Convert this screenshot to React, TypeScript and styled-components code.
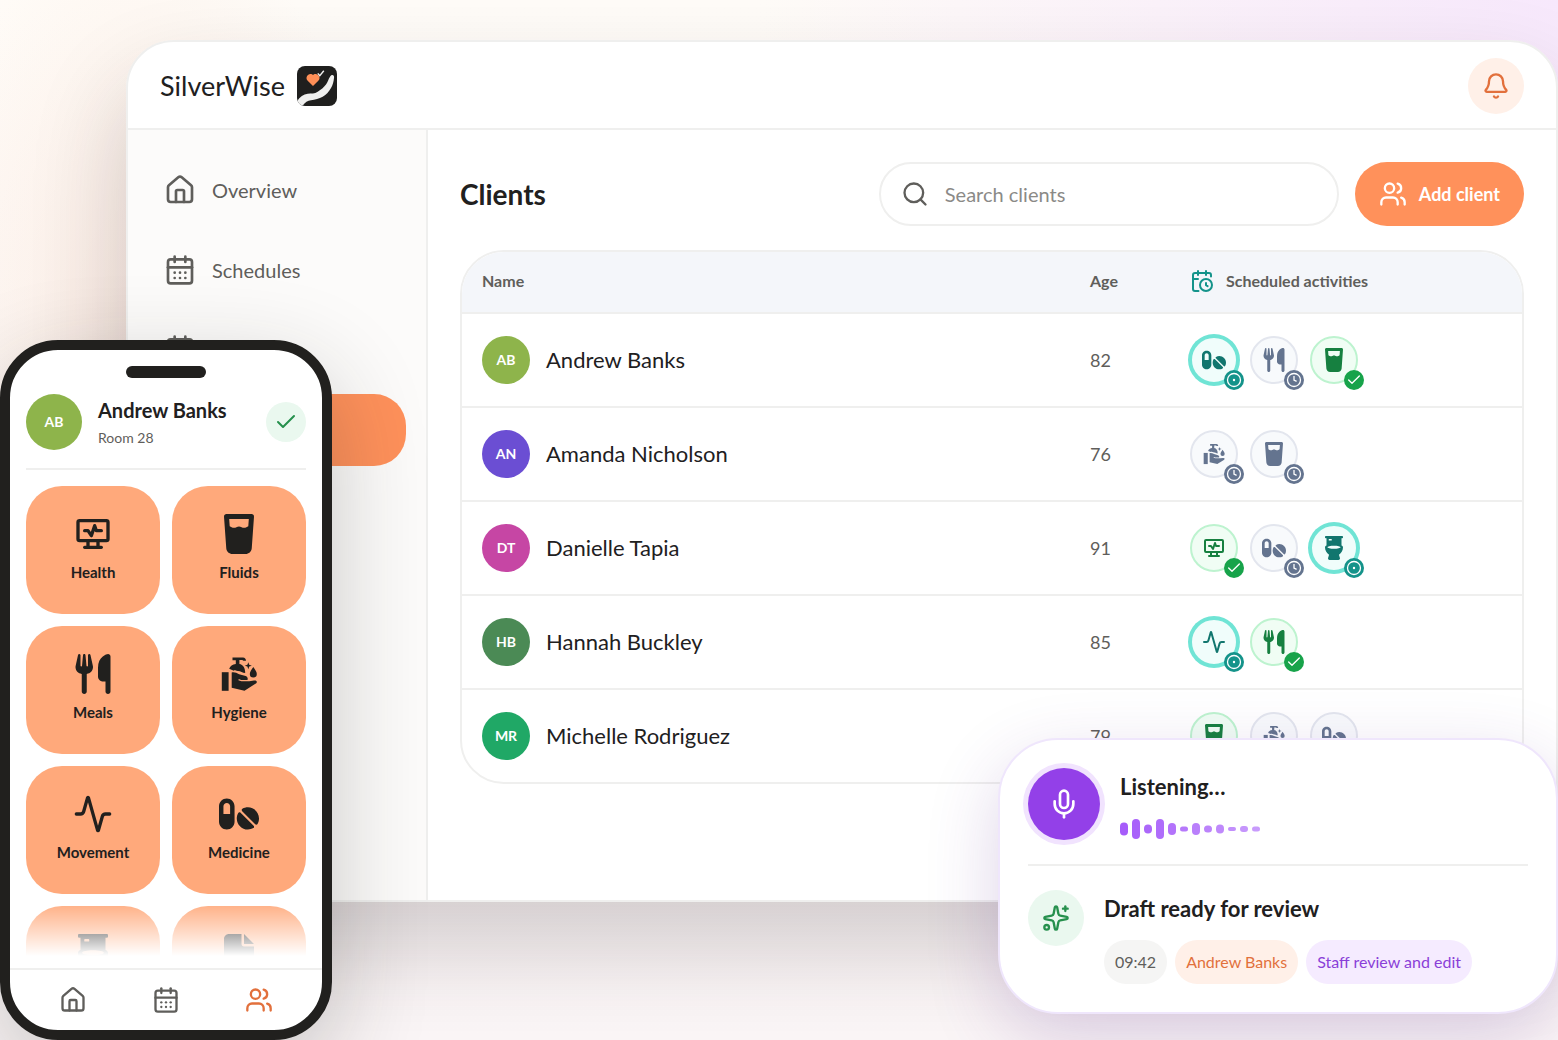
import React from 'react';
import styled, { createGlobalStyle, css } from 'styled-components';
import {
  Activity,
  Bell,
  CalendarClock,
  CalendarDays,
  Check,
  House,
  Mic,
  Search,
  Sparkles,
  Users,
} from 'lucide-react';
import { FaFile, FaGlassWater, FaPills, FaUtensils } from 'react-icons/fa6';
import { FaToilet } from 'react-icons/fa';
import { TbHeartRateMonitor } from 'react-icons/tb';

const color = {
  ink: '#21201e',
  muted: '#5f5e5b',
  faint: '#8b8a87',
  line: '#efefee',
  orange: '#ff915b',
  orangeDark: '#e2703c',
  orangeSoft: '#fff0e8',
  tile: '#ffa97b',
  purple: '#9340e8',
  purpleSoft: '#f5ebff',
  green: '#26904d',
  greenSoft: '#eaf8ef',
};

const GlobalStyle = createGlobalStyle`
  *, *::before, *::after { box-sizing: border-box; }
  body {
    margin: 0;
    color: ${color.ink};
    font-family: Lato, "Open Sans", sans-serif;
  }
  button, input { font: inherit; color: inherit; }
  button { border: 0; padding: 0; background: none; cursor: pointer; }
  h1, h2, p, ul { margin: 0; padding: 0; }
  ul { list-style: none; }
  svg { display: block; flex: none; }
`;

/* ---------- Stage ---------- */

const Stage = styled.main`
  position: relative;
  display: flex;
  flex-direction: column;
  min-height: 100vh;
  padding: 40px 0 138px 126px;
  overflow: hidden;
  background:
    radial-gradient(circle at 100% 0%, #f7e8fc 0, rgba(247, 232, 252, 0) 800px),
    radial-gradient(ellipse 240px 420px at 140px 320px, rgba(248, 222, 208, 0.5), rgba(248, 222, 208, 0)),
    linear-gradient(180deg, #fffcf8, #fbf6f7);
`;

const AppWindow = styled.section`
  display: flex;
  flex: 1;
  flex-direction: column;
  border: 2px solid ${color.line};
  border-radius: 48px 48px 0 0;
  overflow: hidden;
  background: #fff;
`;

const WindowShadow = styled.div`
  display: flex;
  flex: 1;
  flex-direction: column;
  border-radius: 48px 48px 0 0;
  box-shadow: 0 48px 96px rgba(44, 28, 36, 0.2);
`;

/* ---------- Top bar ---------- */

const TopBar = styled.header`
  display: flex;
  align-items: center;
  justify-content: space-between;
  height: 88px;
  padding: 2px 32px 0;
  border-bottom: 2px solid ${color.line};
`;

const Brand = styled.a`
  display: flex;
  align-items: center;
  gap: 12px;
  color: inherit;
  font-size: 27px;
  line-height: 32px;
  text-decoration: none;
`;

const BellButton = styled.button`
  display: grid;
  place-items: center;
  width: 56px;
  height: 56px;
  border-radius: 50%;
  background: ${color.orangeSoft};
  color: ${color.orangeDark};
`;

/* ---------- Sidebar ---------- */

const WindowBody = styled.div`
  display: grid;
  flex: 1;
  grid-template-columns: 300px minmax(0, 1fr);
`;

const Sidebar = styled.nav`
  display: flex;
  flex-direction: column;
  gap: 8px;
  padding: 24px 20px;
  border-right: 2px solid ${color.line};
  background: #fcfbfa;
`;

const SideLink = styled.a<{ $active?: boolean }>`
  display: flex;
  align-items: center;
  gap: 16px;
  height: 72px;
  padding: 0 16px;
  border-radius: 32px;
  background: ${(p) => (p.$active ? color.orange : 'transparent')};
  color: ${(p) => (p.$active ? '#fff' : color.muted)};
  font-size: 20px;
  line-height: 24px;
  text-decoration: none;
`;

/* ---------- Clients panel ---------- */

const Panel = styled.section`
  display: flex;
  flex-direction: column;
  gap: 24px;
  padding: 32px;
`;

const PanelHead = styled.div`
  display: flex;
  align-items: center;
  gap: 16px;
`;

const PanelTitle = styled.h1`
  flex: 1;
  font-size: 28px;
  font-weight: 700;
  line-height: 36px;
`;

const SearchBox = styled.label`
  display: flex;
  align-items: center;
  gap: 16px;
  width: 460px;
  height: 64px;
  padding: 0 20px;
  border: 2px solid ${color.line};
  border-radius: 32px;
  color: ${color.muted};
`;

const SearchInput = styled.input`
  flex: 1;
  min-width: 0;
  border: 0;
  outline: 0;
  padding: 0;
  background: none;
  font-size: 20px;
  line-height: 24px;
  &::placeholder { color: ${color.faint}; opacity: 1; }
`;

const AddButton = styled.button`
  display: flex;
  align-items: center;
  gap: 12px;
  height: 64px;
  padding: 0 24px;
  border-radius: 32px;
  background: ${color.orange};
  color: #fff;
  font-size: 18px;
  font-weight: 700;
  line-height: 24px;
`;

const TableFrame = styled.div`
  overflow: hidden;
  border: 2px solid ${color.line};
  border-radius: 44px;
`;

const Table = styled.table`
  width: 100%;
  border-collapse: separate;
  border-spacing: 0;
  table-layout: fixed;
`;

const HeadCell = styled.th<{ $width?: number }>`
  width: ${(p) => (p.$width ? `${p.$width}px` : 'auto')};
  height: 62px;
  padding: 0 20px 2px;
  border-bottom: 2px solid ${color.line};
  background: #f4f6fa;
  color: ${color.muted};
  font-size: 16px;
  font-weight: 700;
  line-height: 20px;
  text-align: left;
`;

const HeadLabel = styled.span`
  display: flex;
  align-items: center;
  gap: 12px;
  svg { color: #14938a; }
`;

const Cell = styled.td`
  height: 94px;
  padding: 0 20px;
  border-bottom: 2px solid ${color.line};
  color: ${color.muted};
  font-size: 18px;
  line-height: 24px;
  tr:last-child > & {
    height: 92px;
    border-bottom: 0;
  }
`;

const Person = styled.div`
  display: flex;
  align-items: center;
  gap: 16px;
  color: ${color.ink};
  font-size: 22px;
  line-height: 28px;
`;

const Avatar = styled.span<{ $color: string; $size: number }>`
  display: grid;
  flex: none;
  place-items: center;
  width: ${(p) => p.$size}px;
  height: ${(p) => p.$size}px;
  border-radius: 50%;
  background: ${(p) => p.$color};
  color: #fff;
  font-size: 14px;
  font-weight: 700;
  line-height: 20px;
`;

type State = 'now' | 'later' | 'done';

const tones: Record<State, { ink: string; edge: string; fill: string; badge: string }> = {
  now: { ink: '#11766e', edge: '#70e4d5', fill: '#f0fdfb', badge: '#14938a' },
  later: { ink: '#64748f', edge: '#e3e6ee', fill: '#f8fafc', badge: '#64748f' },
  done: { ink: '#168040', edge: '#bdf3cf', fill: '#f0fdf4', badge: '#17a34a' },
};

const ActivityList = styled.ul`
  display: flex;
  gap: 12px;
`;

const ActivityDot = styled.li<{ $state: State }>`
  position: relative;
  display: grid;
  place-items: center;
  width: 48px;
  height: 48px;
  border: 2px solid ${(p) => tones[p.$state].edge};
  border-radius: 50%;
  background: ${(p) => tones[p.$state].fill};
  color: ${(p) => tones[p.$state].ink};
  ${(p) => p.$state === 'now' && css`box-shadow: 0 0 0 2px ${tones.now.edge};`}
`;

const StateBadge = styled.span<{ $state: State }>`
  position: absolute;
  right: -8px;
  bottom: -8px;
  display: grid;
  place-items: center;
  width: 20px;
  height: 20px;
  border-radius: 50%;
  background: ${(p) => tones[p.$state].badge};
  color: #fff;
`;

/* ---------- Phone ---------- */

const Phone = styled.aside`
  position: absolute;
  bottom: 0;
  left: 0;
  display: flex;
  flex-direction: column;
  width: 332px;
  height: 700px;
  border: 10px solid ${color.ink};
  border-radius: 58px;
  overflow: hidden;
  background: #fff;
  box-shadow: 0 32px 96px rgba(33, 32, 30, 0.24);
`;

const Notch = styled.div`
  flex: none;
  align-self: center;
  width: 80px;
  height: 12px;
  margin: 16px 0;
  border-radius: 6px;
  background: ${color.ink};
`;

const PhoneHead = styled.header`
  display: flex;
  align-items: center;
  gap: 16px;
  margin: 0 16px;
  padding-bottom: 18px;
  border-bottom: 2px solid ${color.line};
`;

const PhonePerson = styled.div`
  flex: 1;
`;

const PhoneName = styled.h2`
  font-size: 20px;
  font-weight: 700;
  line-height: 32px;
`;

const PhoneRoom = styled.p`
  color: ${color.muted};
  font-size: 14px;
  line-height: 24px;
`;

const DoneMark = styled.span`
  display: grid;
  place-items: center;
  width: 40px;
  height: 40px;
  border-radius: 50%;
  background: ${color.greenSoft};
  color: ${color.green};
`;

const Tiles = styled.div`
  position: relative;
  display: grid;
  flex: 1;
  grid-template-columns: 1fr 1fr;
  grid-auto-rows: 128px;
  gap: 12px;
  min-height: 0;
  margin: 16px 16px 12px;
  overflow: hidden;
  &::after {
    content: '';
    position: absolute;
    inset: auto 0 0;
    height: 56px;
    background: linear-gradient(rgba(255, 255, 255, 0), #fff);
  }
`;

const Tile = styled.button`
  display: flex;
  flex-direction: column;
  align-items: center;
  gap: 8px;
  padding-top: 28px;
  border-radius: 36px;
  background: ${color.tile};
  font-size: 15px;
  font-weight: 700;
  line-height: 20px;
`;

const TabBar = styled.nav`
  display: grid;
  grid-template-columns: repeat(3, 1fr);
  align-items: center;
  height: 62px;
  padding: 0 16px;
  border-top: 2px solid ${color.line};
`;

const Tab = styled.a<{ $active?: boolean }>`
  display: grid;
  place-items: center;
  color: ${(p) => (p.$active ? color.orangeDark : color.muted)};
`;

/* ---------- Voice card ---------- */

const VoiceCard = styled.aside`
  position: absolute;
  right: 0;
  bottom: 26px;
  width: 560px;
  padding: 28px;
  border: 2px solid #efe6fc;
  border-radius: 60px;
  background: #fff;
  box-shadow: 0 24px 72px rgba(92, 40, 140, 0.2);
`;

const Listening = styled.div`
  display: flex;
  align-items: center;
  gap: 20px;
  padding-bottom: 24px;
  border-bottom: 2px solid ${color.line};
`;

const MicButton = styled.button`
  display: grid;
  place-items: center;
  width: 72px;
  height: 72px;
  border-radius: 50%;
  background: ${color.purple};
  box-shadow: 0 0 0 5px #f1e3fe;
  color: #fff;
`;

const ListeningText = styled.div`
  display: flex;
  flex-direction: column;
  gap: 12px;
`;

const CardTitle = styled.h2`
  font-size: 22px;
  font-weight: 700;
  line-height: 38px;
`;

const Draft = styled.div`
  display: flex;
  align-items: flex-start;
  gap: 20px;
  padding-top: 24px;
`;

const DraftIcon = styled.span`
  display: grid;
  flex: none;
  place-items: center;
  width: 56px;
  height: 56px;
  border-radius: 50%;
  background: ${color.greenSoft};
  color: ${color.green};
`;

const DraftText = styled.div`
  display: flex;
  flex-direction: column;
  gap: 12px;
`;

const Chips = styled.ul`
  display: flex;
  gap: 8px;
`;

const Chip = styled.li<{ $ink: string; $fill: string }>`
  height: 44px;
  padding: 0 11px;
  border-radius: 22px;
  background: ${(p) => p.$fill};
  color: ${(p) => p.$ink};
  font-size: 16px;
  line-height: 44px;
  white-space: nowrap;
`;

/* ---------- Drawings ---------- */

const LogoMark = () => (
  <svg width="40" height="40" viewBox="0 0 40 40" aria-hidden="true">
    <defs>
      <clipPath id="mark"><rect width="40" height="40" rx="8" /></clipPath>
    </defs>
    <g clipPath="url(#mark)">
      <rect width="40" height="40" fill="#1f1f1e" />
      <path
        d="M-1 37C2 31.500 6 28.500 10.700 27.800c3.600-.5 7 0 10-2.100 3.500-2 6-4.400 8.300-7.200 2-2.600 2.400-5.400 4-7.800.8-1.300 2-1.900 3-1.400s1.200 1.500 1 2.700c-.4 3.600-1.200 7-3 10-2 3.600-4.600 6.600-8.300 8.700-3.600 2-7.600 3-11.700 3.500-3.300.5-6 2-8.300 5.300L0 42z"
        fill="#f0f0ef"
      />
      <path
        d="M16 20l-5.300-5.200c-3-3.200.3-8.200 4.300-6.600l1 .7 1-.7c4-1.600 7.500 3.200 4.300 6.600z"
        fill="#ff8f57"
      />
      <path d="M20.800 7.400l2 2.200 4-4.800" fill="none" stroke="#f0f0ef" strokeWidth="1.400" />
    </g>
  </svg>
);

const HygieneIcon = ({ size }: { size: number }) => (
  <svg width={size} height={size} viewBox="0 0 40 40" fill="currentColor" aria-hidden="true">
    <path d="M13.500 3.400H24c1.800 0 3 1.300 3 3.300h-2.600c-.3-.5-.8-.8-1.400-.8h-2.600v4.200c3.600.6 5.800 4 5.800 8.900-2.600-.3-4.600-2-7.200-2.100-2-.1-3.600.1-5.400-.6l-3.400-1.500c.8-2.600 3.400-4.400 6.600-4.700V6.200h-3.300z" />
    <rect x="2.800" y="18.200" width="6.800" height="18.600" />
    <path d="M12.700 18.400c2.600-.6 5 .4 7.400 1.800l6.600 1.800c2 .7 2.400 2.700 1.700 4h-6.200l-2.400-.9-.4 1.100 3 1h8l4.600-.6c3-.4 3.800 1.800 1.400 3.200L25.500 36.700l-12.800-2.900z" />
    <path d="M29.300 8.200l.9 2.600 2.600.9-2.600.9-.9 2.600-.9-2.600-2.600-.9 2.600-.9z" />
    <path d="M34.300 13c2 3 3.500 5 3.500 6.900a3.500 3.500 0 0 1-7 0c0-1.900 1.500-3.900 3.500-6.900z" />
  </svg>
);

const waveform = [13, 20, 9, 20, 12, 5, 12, 7, 9, 4, 6, 5];

const Waveform = () => (
  <svg width="140" height="22" viewBox="0 0 140 22" role="img" aria-label="Voice level">
    {waveform.map((h, i) => (
      <rect
        key={i}
        x={i * 12}
        y={11 - h / 2}
        width="8"
        height={h}
        rx={Math.min(4, h / 2)}
        fill="#a65cfa"
        opacity={1 - i * 0.035}
      />
    ))}
  </svg>
);

type Kind = 'health' | 'fluids' | 'meals' | 'hygiene' | 'movement' | 'medicine' | 'toilet' | 'notes';

const KindIcon = ({ kind, size }: { kind: Kind; size: number }) => {
  switch (kind) {
    case 'health': return <TbHeartRateMonitor size={size} />;
    case 'fluids': return <FaGlassWater size={size} />;
    case 'meals': return <FaUtensils size={size} />;
    case 'hygiene': return <HygieneIcon size={size} />;
    case 'movement': return <Activity size={size} />;
    case 'medicine': return <FaPills size={size} />;
    case 'toilet': return <FaToilet size={size} />;
    default: return <FaFile size={size} />;
  }
};

const StateMark = ({ state }: { state: State }) => {
  if (state === 'done') return <Check size={16} />;
  return (
    <svg width="16" height="16" viewBox="0 0 16 16" fill="none" stroke="currentColor" strokeWidth="1.300">
      <circle cx="8" cy="8" r="6.500" />
      {state === 'now' ? (
        <circle cx="8" cy="8" r="1.200" fill="currentColor" stroke="none" />
      ) : (
        <path d="M8 4v4l2.600 1.400" />
      )}
    </svg>
  );
};

/* ---------- Data ---------- */

type Client = { initials: string; name: string; age: number; color: string; plan: [Kind, State][] };

const clients: Client[] = [
  { initials: 'AB', name: 'Andrew Banks', age: 82, color: '#8eb44b', plan: [['medicine', 'now'], ['meals', 'later'], ['fluids', 'done']] },
  { initials: 'AN', name: 'Amanda Nicholson', age: 76, color: '#6b4ed3', plan: [['hygiene', 'later'], ['fluids', 'later']] },
  { initials: 'DT', name: 'Danielle Tapia', age: 91, color: '#c646a4', plan: [['health', 'done'], ['medicine', 'later'], ['toilet', 'now']] },
  { initials: 'HB', name: 'Hannah Buckley', age: 85, color: '#4b8a55', plan: [['movement', 'now'], ['meals', 'done']] },
  { initials: 'MR', name: 'Michelle Rodriguez', age: 79, color: '#20a866', plan: [['fluids', 'done'], ['hygiene', 'later'], ['medicine', 'later']] },
];

const tiles: { kind: Kind; label?: string }[] = [
  { kind: 'health', label: 'Health' },
  { kind: 'fluids', label: 'Fluids' },
  { kind: 'meals', label: 'Meals' },
  { kind: 'hygiene', label: 'Hygiene' },
  { kind: 'movement', label: 'Movement' },
  { kind: 'medicine', label: 'Medicine' },
  { kind: 'toilet' },
  { kind: 'notes' },
];

/* ---------- Page ---------- */

export default function App() {
  return (
    <Stage>
      <GlobalStyle />
      <WindowShadow>
        <AppWindow>
          <TopBar>
            <Brand href="#home">
              SilverWise
              <LogoMark />
            </Brand>
            <BellButton aria-label="Notifications"><Bell size={28} /></BellButton>
          </TopBar>
          <WindowBody>
            <Sidebar>
              <SideLink href="#overview"><House size={32} />Overview</SideLink>
              <SideLink href="#schedules"><CalendarDays size={32} />Schedules</SideLink>
              <SideLink href="#calendar" aria-label="Calendar"><CalendarDays size={32} /></SideLink>
              <SideLink href="#clients" aria-label="Clients" $active><Users size={32} /></SideLink>
            </Sidebar>
            <Panel>
              <PanelHead>
                <PanelTitle>Clients</PanelTitle>
                <SearchBox>
                  <Search size={28} />
                  <SearchInput type="search" placeholder="Search clients" aria-label="Search clients" />
                </SearchBox>
                <AddButton><Users size={28} />Add client</AddButton>
              </PanelHead>
              <TableFrame>
                <Table>
                  <thead>
                    <tr>
                      <HeadCell>Name</HeadCell>
                      <HeadCell $width={100}>Age</HeadCell>
                      <HeadCell $width={352}>
                        <HeadLabel><CalendarClock size={24} />Scheduled activities</HeadLabel>
                      </HeadCell>
                    </tr>
                  </thead>
                  <tbody>
                    {clients.map((c) => (
                      <tr key={c.initials}>
                        <Cell>
                          <Person>
                            <Avatar $color={c.color} $size={48}>{c.initials}</Avatar>
                            {c.name}
                          </Person>
                        </Cell>
                        <Cell>{c.age}</Cell>
                        <Cell>
                          <ActivityList>
                            {c.plan.map(([kind, state]) => (
                              <ActivityDot key={kind} $state={state}>
                                <KindIcon kind={kind} size={24} />
                                <StateBadge $state={state}><StateMark state={state} /></StateBadge>
                              </ActivityDot>
                            ))}
                          </ActivityList>
                        </Cell>
                      </tr>
                    ))}
                  </tbody>
                </Table>
              </TableFrame>
            </Panel>
          </WindowBody>
        </AppWindow>
      </WindowShadow>

      <Phone>
        <Notch />
        <PhoneHead>
          <Avatar $color="#8eb44b" $size={56}>AB</Avatar>
          <PhonePerson>
            <PhoneName>Andrew Banks</PhoneName>
            <PhoneRoom>Room 28</PhoneRoom>
          </PhonePerson>
          <DoneMark><Check size={24} /></DoneMark>
        </PhoneHead>
        <Tiles>
          {tiles.map((t) => (
            <Tile key={t.kind} aria-label={t.label ?? t.kind}>
              <KindIcon kind={t.kind} size={40} />
              {t.label}
            </Tile>
          ))}
        </Tiles>
        <TabBar>
          <Tab href="#overview" aria-label="Overview"><House size={28} /></Tab>
          <Tab href="#schedules" aria-label="Schedules"><CalendarDays size={28} /></Tab>
          <Tab href="#clients" aria-label="Clients" $active><Users size={28} /></Tab>
        </TabBar>
      </Phone>

      <VoiceCard>
        <Listening>
          <MicButton aria-label="Stop listening"><Mic size={32} /></MicButton>
          <ListeningText>
            <CardTitle>Listening…</CardTitle>
            <Waveform />
          </ListeningText>
        </Listening>
        <Draft>
          <DraftIcon><Sparkles size={28} /></DraftIcon>
          <DraftText>
            <CardTitle>Draft ready for review</CardTitle>
            <Chips>
              <Chip $ink={color.muted} $fill="#f5f5f4">09:42</Chip>
              <Chip $ink={color.orangeDark} $fill={color.orangeSoft}>Andrew Banks</Chip>
              <Chip $ink="#8a3fd8" $fill={color.purpleSoft}>Staff review and edit</Chip>
            </Chips>
          </DraftText>
        </Draft>
      </VoiceCard>
    </Stage>
  );
}
